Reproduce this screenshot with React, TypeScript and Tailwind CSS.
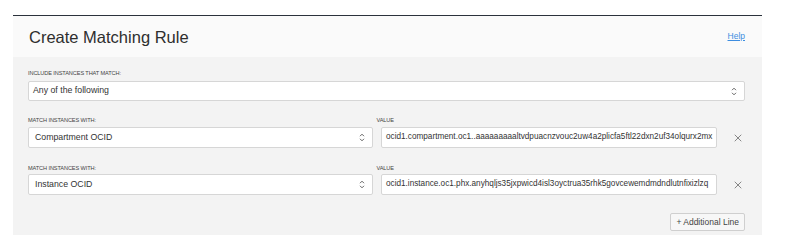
import { X } from "lucide-react";

const rows = [
  {
    field: "Compartment OCID",
    value: "ocid1.compartment.oc1..aaaaaaaaaltvdpuacnzvouc2uw4a2plicfa5ftl22dxn2uf34olqurx2mx",
  },
  {
    field: "Instance OCID",
    value: "ocid1.instance.oc1.phx.anyhqljs35jxpwicd4isl3oyctrua35rhk5govcewemdmdndlutnfixizlzq",
  },
];

function Chevrons() {
  return (
    <svg width="6" height="9" viewBox="0 0 6 9" fill="none" stroke="#555" strokeWidth="0.9">
      <path d="M1 3.2 L3 1.2 L5 3.2" />
      <path d="M1 5.8 L3 7.8 L5 5.8" />
    </svg>
  );
}

function Label({ children }: { children: React.ReactNode }) {
  return (
    <div className="text-[5.6px] leading-[8px] uppercase text-[#444] tracking-[-0.1px]">
      {children}
    </div>
  );
}

function Select({ text, className }: { text: string; className?: string }) {
  return (
    <div
      className={
        "flex items-center justify-between bg-white border border-[#d6d6d6] rounded-[2px] pr-[7px] text-[8.75px] text-[#333] " +
        (className ?? "")
      }
    >
      <span>{text}</span>
      <Chevrons />
    </div>
  );
}

export default function App() {
  return (
    <div className="w-[795px] h-[250px] bg-white pt-[15px] pl-[13px]" style={{ fontFamily: '"Liberation Sans", Arial, sans-serif' }}>
      <div className="w-[749px] border-t-[1.5px] border-[#2b323c]">
        {/* Header */}
        <div className="h-[41px] bg-[#fafafa] flex items-center justify-between pl-[16px] pr-[17px]">
          <h1 className="text-[16.5px] text-[#2e2e2e] mt-[1px]">Create Matching Rule</h1>
          <a className="text-[8.5px] text-[#3d8de0] underline">Help</a>
        </div>

        {/* Body */}
        <div className="bg-[#f3f3f3] pl-[15px] pr-[17px] pt-[12px] pb-[4px]">
          <Label>Include instances that match:</Label>
          <Select text="Any of the following" className="h-[20px] mt-[4px] pl-[4px]" />

          {rows.map((row, i) => (
            <div key={i} className={i === 0 ? "mt-[15px]" : "mt-[16px]"}>
              <div className="flex gap-[8px]">
                <div className="flex-1">
                  <Label>Match instances with:</Label>
                </div>
                <div className="flex-1">
                  <Label>Value</Label>
                </div>
                <div className="w-[20px]" />
              </div>
              <div className={"flex gap-[8px] " + (i === 0 ? "mt-[3px]" : "mt-[2px]")}>
                <Select text={row.field} className="flex-1 h-[21px] pl-[6px]" />
                <div className="flex-1 h-[21px] flex items-center bg-white border border-[#d6d6d6] rounded-[2px] pl-[4px] text-[8.2px] text-[#333] overflow-hidden whitespace-nowrap">
                  {row.value}
                </div>
                <div className="w-[20px] flex items-center justify-end pr-[1px]">
                  <X size={12} strokeWidth={1.25} className="text-[#444]" />
                </div>
              </div>
            </div>
          ))}

          <div className="flex justify-end mt-[18px]">
            <button className="h-[18px] px-[5px] bg-[#f7f7f7] border border-[#cfcfcf] rounded-[2px] text-[8.5px] text-[#444]">
              + Additional Line
            </button>
          </div>
        </div>
      </div>
    </div>
  );
}
